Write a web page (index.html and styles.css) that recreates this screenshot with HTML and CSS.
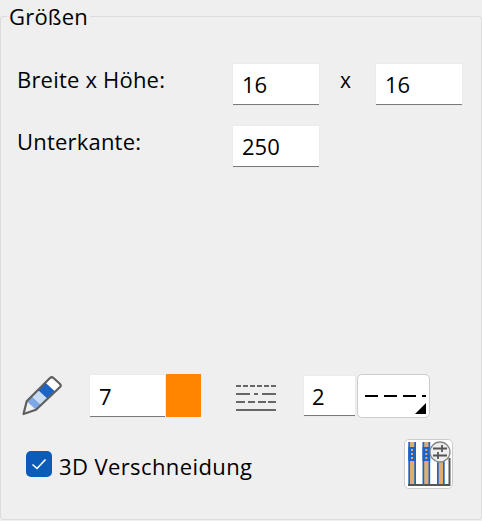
FILE: index.html
```html
<!DOCTYPE html>
<html lang="de">
<head>
    <meta charset="UTF-8">
    <title>Größen</title>
    <link rel="stylesheet" href="styles.css">
</head>
<body>
    <fieldset class="panel">
        <legend>Größen</legend>

        <div class="size-row">
            <span class="size-label">Breite x Höhe:</span>
            <div class="field field-size">16</div>
            <span class="times">x</span>
            <div class="field field-size">16</div>
        </div>
        <div class="size-row size-row-second">
            <span class="size-label">Unterkante:</span>
            <div class="field field-size">250</div>
        </div>

        <div class="spacer"></div>

        <div class="tool-row">
            <svg class="pencil" width="40" height="40" viewBox="0 0 40 40">
                <polygon points="4.700,25.300 14,33.700 19,28.700 9.700,20.300" fill="#7ea8e4"/>
                <polygon points="9.700,20.300 19,28.700 25.250,22.450 15.950,14.050" fill="#c9dcf3"/>
                <polygon points="15.950,14.050 25.250,22.450 32.750,14.950 23.450,6.550" fill="#1b63c4"/>
                <polygon points="23.450,6.550 32.750,14.950 38,9 30,1.500" fill="#fff"/>
                <path d="M1.500 38 L4.700 25.300 L28 2 Q29.700 .5 31.500 2 L38 8 Q39.500 9.500 38 11 L14 33.700 Z" fill="none" stroke="#5f5f5f" stroke-width="2.200" stroke-linejoin="round"/>
            </svg>
            <div class="field field-pen">7</div>
            <div class="swatch"></div>
            <svg class="line-types" width="40" height="28" viewBox="0 0 40 28">
                <g fill="none" stroke="#666" stroke-width="2">
                    <path d="M0 2 H40" stroke-dasharray="5 2"/>
                    <path d="M0 10 H14 M18 10 H22 M26 10 H40"/>
                    <path d="M0 18 H9 M12 18 H19 M22 18 H30 M32 18 H40"/>
                    <path d="M0 26 H40"/>
                </g>
            </svg>
            <div class="field field-type">2</div>
            <div class="line-button">
                <span class="dash-line"></span>
                <span class="corner"></span>
            </div>
        </div>

        <div class="check-row">
            <span class="checkbox">
                <svg width="16" height="12" viewBox="0 0 16 12">
                    <path d="M1.500 6.500 L6 10.500 L14.500 1.500" fill="none" stroke="#fff" stroke-width="1.600"/>
                </svg>
            </span>
            <span class="check-label">3D Verschneidung</span>
            <button class="icon-button" type="button">
                <svg width="47" height="48" viewBox="0 0 47 48">
                    <rect x="3.300" y="2" width="7.700" height="43" fill="#1b63c4"/>
                    <rect x="5" y="2" width="4.300" height="43" fill="#e0ac72"/>
                    <rect x="3.300" y="7" width="7.700" height="14" fill="#1b63c4"/>
                    <path d="M7 9 V19" stroke="#e0ac72" stroke-width="2" stroke-dasharray="2 2"/>
                    <rect x="17.500" y="2" width="7.700" height="43" fill="#1b63c4"/>
                    <rect x="19.200" y="2" width="4.300" height="43" fill="#e0ac72"/>
                    <rect x="17.500" y="7" width="7.700" height="14" fill="#1b63c4"/>
                    <path d="M21.300 9 V19" stroke="#e0ac72" stroke-width="2" stroke-dasharray="2 2"/>
                    <rect x="32" y="18" width="7.700" height="27" fill="#1b63c4"/>
                    <rect x="33.700" y="18" width="4.300" height="27" fill="#e0ac72"/>
                    <path d="M3 45 H45 M44.500 18 V46" fill="none" stroke="#555" stroke-width="2"/>
                    <circle cx="35" cy="12" r="10" fill="#eee" stroke="#888" stroke-width="1.300"/>
                    <path d="M28 8.500 H42 M28 15.500 H42 M37 5 V12 M33 12 V19" fill="none" stroke="#555" stroke-width="1.800"/>
                </svg>
            </button>
        </div>
    </fieldset>
</body>
</html>
```

FILE: styles.css
```css
* {
    box-sizing: border-box;
}

body {
    margin: 0;
    background-color: #efefef;
    color: #000;
    font-family: 'Open Sans', sans-serif;
    font-size: 22px;
}

.panel {
    display: flex;
    flex-direction: column;
    height: 516px;
    margin: 4px 0 0 0;
    min-width: 0;
    padding: 36px 0 0 16px;
    border: 1px solid #dcdcdc;
    border-radius: 3px;
}

legend {
    margin-left: -10px;
    padding: 0 2px;
    line-height: 24px;
    letter-spacing: 0.2px;
}

.size-row {
    display: flex;
    align-items: center;
    height: 40px;
}

.size-row-second {
    margin-top: 22px;
}

.size-label {
    width: 216px;
    margin-top: -11px;
    letter-spacing: 0.2px;
}

.field {
    display: flex;
    align-items: center;
    background-color: #fff;
    border-bottom: 1px solid #7a7a7a;
    box-shadow: 0 0 1px #ddd;
}

.field-size {
    width: 86px;
    height: 41px;
    padding-left: 9px;
}

.times {
    width: 57px;
    margin-top: -9px;
    padding-right: 4px;
    text-align: center;
    font-size: 21px;
}

.spacer {
    flex: 1;
}

.tool-row {
    display: flex;
    align-items: center;
    height: 46px;
    margin-left: 5px;
}

.field-pen {
    width: 75px;
    height: 42px;
    margin-left: 28px;
    padding-left: 9px;
}

.swatch {
    width: 35px;
    height: 43px;
    margin-top: -2px;
    margin-left: 1px;
    background-color: #ff8400;
}

.line-types {
    margin-top: 4px;
    margin-left: 35px;
}

.field-type {
    width: 51px;
    height: 40px;
    margin-left: 28px;
    padding-left: 8px;
}

.line-button {
    position: relative;
    display: flex;
    align-items: center;
    width: 73px;
    height: 44px;
    margin-left: 2px;
    padding-left: 7px;
    background-color: #fff;
    border: 1px solid #ccc;
    border-radius: 5px;
}

.dash-line {
    width: 61px;
    height: 2px;
    background: repeating-linear-gradient(90deg, #000 0 13px, transparent 13px 19px);
}

.corner {
    position: absolute;
    right: 3px;
    bottom: 3px;
    width: 0;
    height: 0;
    border-left: 11px solid transparent;
    border-bottom: 11px solid #000;
}

.check-row {
    display: flex;
    align-items: center;
    height: 50px;
    margin: 20px 0 30px 9px;
}

.checkbox {
    display: flex;
    align-items: center;
    justify-content: center;
    width: 26px;
    height: 26px;
    background-color: #0b5cb8;
    border-radius: 5px;
}

.check-label {
    margin-top: 4px;
    margin-left: 7px;
    letter-spacing: 0.4px;
}

.icon-button {
    display: flex;
    width: 49px;
    height: 50px;
    margin-left: auto;
    margin-right: 28px;
    padding: 0;
    background-color: #fff;
    border: 1px solid #ccc;
    border-radius: 5px;
}
```
